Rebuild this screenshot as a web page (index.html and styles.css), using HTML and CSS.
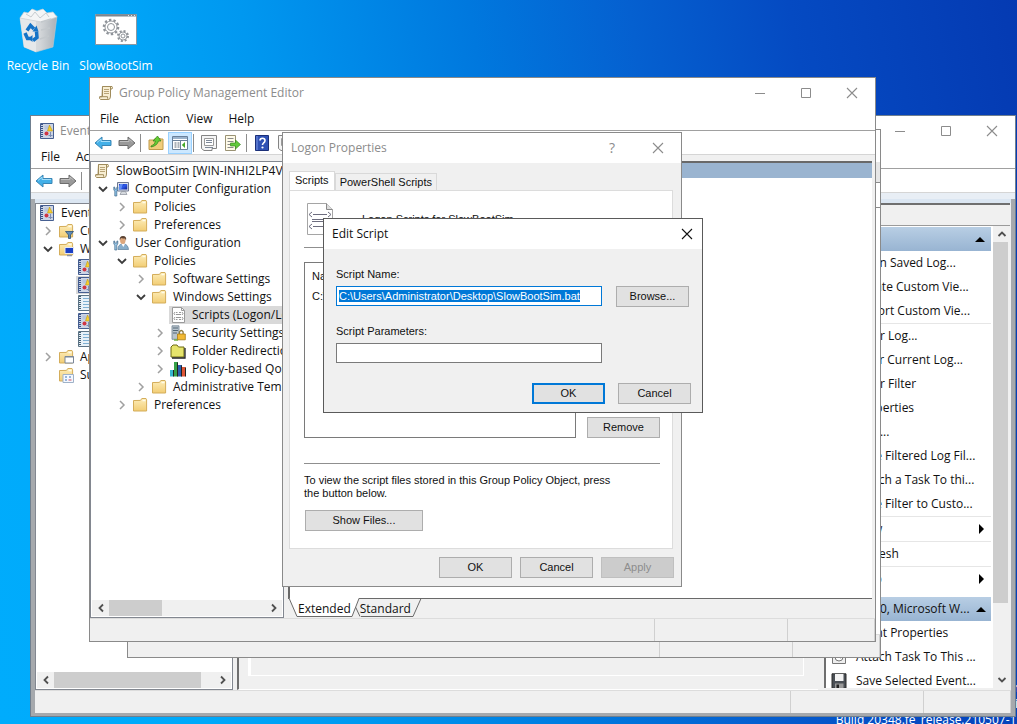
FILE: index.html
```
<!DOCTYPE html>
<html lang="en">
<head>
<meta charset="utf-8">
<title>Group Policy Management Editor</title>
<link rel="stylesheet" href="styles.css">
</head>
<body>
<svg class="sprite" aria-hidden="true">
  <defs>
    <linearGradient id="g-folder" x1="0" y1="0" x2="0" y2="1"><stop offset="0" stop-color="#fdedb8"/><stop offset="1" stop-color="#f2cd74"/></linearGradient>
    <linearGradient id="g-bin" x1="0" y1="0" x2="1" y2="0"><stop offset="0" stop-color="#e9ebed"/><stop offset=".55" stop-color="#d3d6d9"/><stop offset="1" stop-color="#a9b0b7"/></linearGradient>
    <linearGradient id="g-screen" x1="0" y1="0" x2="1" y2="1"><stop offset="0" stop-color="#1226a8"/><stop offset=".5" stop-color="#2f5bea"/><stop offset="1" stop-color="#0a1c90"/></linearGradient>
  </defs>
  <symbol id="chev-right" viewBox="0 0 10 10"><path d="M3 1l4 4-4 4" fill="none" stroke="#a0a0a0" stroke-width="1.5"/></symbol>
  <symbol id="chev-down" viewBox="0 0 10 10"><path d="M1 3l4 4 4-4" fill="none" stroke="#3c3c3c" stroke-width="1.8"/></symbol>
  <symbol id="arr-left" viewBox="0 0 10 10"><path d="M7 1.500L3.500 5 7 8.500" fill="none" stroke="#505050" stroke-width="1.8"/></symbol>
  <symbol id="arr-right" viewBox="0 0 10 10"><path d="M3 1.500L6.500 5 3 8.500" fill="none" stroke="#505050" stroke-width="1.8"/></symbol>
  <symbol id="arr-up" viewBox="0 0 10 10"><path d="M1.500 7L5 3.500 8.500 7" fill="none" stroke="#505050" stroke-width="1.8"/></symbol>
  <symbol id="arr-down" viewBox="0 0 10 10"><path d="M1.500 3L5 6.500 8.500 3" fill="none" stroke="#505050" stroke-width="1.8"/></symbol>
  <symbol id="min" viewBox="0 0 12 12"><path d="M1 6.500h10" stroke="currentColor"/></symbol>
  <symbol id="max" viewBox="0 0 12 12"><path d="M1.500 1.500h9v9h-9z" fill="none" stroke="currentColor"/></symbol>
  <symbol id="close" viewBox="0 0 12 12"><path d="M1 1l10 10M11 1L1 11" stroke="currentColor" stroke-width="1.1"/></symbol>
  <symbol id="scroll" viewBox="0 0 16 16"><path d="M4.500 1.500h9.500q1 .8 0 2.500h-1.500V11q0 3.500-2 3.500h-8q-1.500-.8-.8-2.800H4z" fill="#f8eed2" stroke="#a08c5c"/><path d="M4.500 1.500v10M1.800 11.700h7.700q-.2 2 1 2.800M12.500 4V2" fill="none" stroke="#a08c5c"/><path d="M6 4.500h5M6 6.500h5M6 8.500h5" stroke="#b9a578"/></symbol>
  <symbol id="folder" viewBox="0 0 16 16"><path d="M1.500 14V3.500H3l5.500-.1L9.800 1.500H14l.6 1.300V14z" fill="url(#g-folder)" stroke="#d4ad5a"/><path d="M10.500 3.500h3" stroke="#fffbe8" stroke-width="1.500"/></symbol>
  <symbol id="computer" viewBox="0 0 16 16"><path d="M4.500 1.500h11v8.500h-11z" fill="#dfe4ee" stroke="#6c7690"/><path d="M6 3h8.300v5.500H6z" fill="url(#g-screen)"/><path d="M7 3h3L8 8.500H6V5z" fill="#5f8cf5"/><path d="M8.500 10.500h4l1.500 3H7z" fill="#d5d9de" stroke="#8a8f99" stroke-width=".7"/><path d="M.8 6v3l1 1v5h2V10l1-1V6h-.9v2H1.700V6z" fill="#8cc2e8" stroke="#40688a" stroke-width=".7"/></symbol>
  <symbol id="user" viewBox="0 0 16 16"><path d="M5 14.500q0-5 4-5.500h2q4 .5 4.500 5.500z" fill="#88aecb" stroke="#5a7d99" stroke-width=".7"/><path d="M8.500 9l1.800 3 1.700-3z" fill="#fff"/><ellipse cx="9.800" cy="5.500" rx="2.700" ry="3.500" fill="#dda77c"/><path d="M6.800 5.500Q6 1 10 1t3 4.500l-1-2q-2 0-4-.5z" fill="#5c4333"/><path d="M.8 6v3l1 1v5h2V10l1-1V6h-.9v2H1.700V6z" fill="#9cc9e8" stroke="#40688a" stroke-width=".7"/></symbol>
  <symbol id="scripts" viewBox="0 0 16 16"><path d="M2.500.5h9l3 3v12h-12z" fill="#fff" stroke="#9a9a9a"/><path d="M11.500.5v3h3" fill="none" stroke="#9a9a9a"/><path d="M5 5L4 6.500 5 8M12 5l1 1.500L12 8M5 10l-1 1.500L5 13M12 10l1 1.500-1 1.500M6 5.500h1.500M9 5.500h2M6 7.500h5M6 10.500h5M6 12.500h1.500M9 12.500h2" fill="none" stroke="#8b8b8b" stroke-width=".9"/></symbol>
  <symbol id="security" viewBox="0 0 16 16"><path d="M2 .8h7v13.500H2z" fill="#b8c3cc" stroke="#6f8190" stroke-width=".8"/><path d="M3 3h5M3 5.500h5M3 8h4" stroke="#4f6475"/><path d="M4 15h4" stroke="#6cb33f" stroke-width="1.500"/><path d="M9.500 9V6.800q1.800-2.600 3.600 0V9" fill="none" stroke="#8c7a3e" stroke-width="1.300"/><path d="M7.500 9h7.800v5.800H7.500z" fill="#f2b933" stroke="#a97c14" stroke-width=".8"/></symbol>
  <symbol id="redirect" viewBox="0 0 16 16"><path d="M1 14V4l2-2h4l1.500 2H14v10z" fill="#e6e46c" stroke="#6d6b13"/><path d="M15 5v10H2" fill="none" stroke="#222" stroke-width="1.300"/></symbol>
  <symbol id="qos" viewBox="0 0 16 16"><path d="M0 9h4v6.500H0z" fill="#35b6cf"/><path d="M4 1h4v14.500H4z" fill="#35a047"/><path d="M8 4h4v11.500H8z" fill="#2a5cad"/><path d="M12 6h3.500v9.500H12z" fill="#dd5536"/><path d="M3.500 9v6.500M7.500 1.500v14M11.500 4.500v11M15.500 6.500v9" stroke="#222"/></symbol>
  <symbol id="back" viewBox="0 0 18 16"><path d="M1 8l7-6v3.500h9v5H8V14z" fill="#43b0e8" stroke="#3a86b5"/><path d="M3 7.500L7 4v2.500h9" fill="none" stroke="#a4defa"/></symbol>
  <symbol id="fwd" viewBox="0 0 18 16"><path d="M17 8l-7-6v3.500H1v5h9V14z" fill="#9a9a9a" stroke="#6d6d6d"/><path d="M2 6.500h9V4l3.500 3" fill="none" stroke="#c0c0c0"/></symbol>
  <symbol id="upfolder" viewBox="0 0 16 16"><path d="M1 14.500V5h5l1-1.500h5L13 4h2v10.500z" fill="#f0cd7c" stroke="#c09a4a"/><path d="M3 11q4-1 4.500-5H5l4.500-5L13 6h-2.500Q9 11 3 12z" fill="#65cc34" stroke="#2f8117" stroke-width=".7"/></symbol>
  <symbol id="tree" viewBox="0 0 16 16"><path d="M.5 1.500h15v13H.5z" fill="#fff" stroke="#69809a"/><path d="M1 3h14" stroke="#9bb3cb" stroke-width="2"/><path d="M1 5.500h14M8.500 6v8" stroke="#69809a"/><path d="M2.500 8h2M2.500 10h2M2.500 12h2M5.500 8h2M5.500 10h2M5.500 12h2" stroke="#5c6875"/><path d="M13 7v6L9.800 10z" fill="#44a827"/></symbol>
  <symbol id="props" viewBox="0 0 16 16"><path d="M.5.5h15v13H11v2H3l-2.500-2z" fill="#f5f5f5" stroke="#848484"/><path d="M3.500 3.500h9v7h-9z" fill="#fff" stroke="#9a9a9a"/><path d="M5 5.500h6M5 7.500h6M4 12.500h8" stroke="#7d8898"/></symbol>
  <symbol id="export" viewBox="0 0 16 16"><path d="M.5.500h10v15H.5z" fill="#fffbe9" stroke="#9a9274"/><path d="M2.500 3.500h6M2.500 6.500h6M2.500 9.500h3M2.500 12.500h6" stroke="#8b8b8b"/><path d="M5.500 8h5V5l5 4.500-5 4.500v-3h-5z" fill="#62c93c" stroke="#2f8117" stroke-width=".6"/></symbol>
  <symbol id="help" viewBox="0 0 16 16"><path d="M1.500.5h13v15h-13z" fill="#3052b5" stroke="#1b2f78"/><path d="M3 1v14" stroke="#7b96e3"/><path d="M6 5.500Q6 3.200 8.500 3.200T11 5.500Q11 7 9.500 8q-1 .8-1 2" fill="none" stroke="#fff" stroke-width="1.600"/><circle cx="8.500" cy="12.500" r="1.100" fill="#fff"/></symbol>
  <symbol id="eventlog" viewBox="0 0 16 16"><path d="M1.500.5h13v15h-13z" fill="#ccd5e6" stroke="#465f91"/><path d="M3 1v14" stroke="#3b5286" stroke-width="2" stroke-dasharray="1 1"/><path d="M5.500 2.500h4v4h-4z" fill="#b9c6dd"/><path d="M10.500 2L13.500 8h-5z" fill="#f6d02c" stroke="#b98a00" stroke-width=".5"/><circle cx="7.500" cy="10.500" r="2" fill="#cf3544"/><path d="M9.500 12.500h4M11.500 9v5" stroke="#7d8fb4"/></symbol>
  <symbol id="log" viewBox="0 0 16 16"><path d="M1.500.5h13v15h-13z" fill="#e8f1f8" stroke="#5c7486"/><path d="M3 1v14" stroke="#465f71" stroke-width="2" stroke-dasharray="1 1"/><path d="M6 3.500h7M6 6.500h7M6 9.500h7M6 12.500h7" stroke="#7fb0d2"/></symbol>
  <symbol id="folder-filter" viewBox="0 0 16 16"><use href="#folder"/><path d="M7.500 8.500h8L12.500 12v3.500h-2V12z" fill="#5d8bb8" stroke="#2d4f73" stroke-width=".8"/></symbol>
  <symbol id="folder-pc" viewBox="0 0 16 16"><use href="#folder"/><path d="M7 6.500h8.500v6H7z" fill="#1b3fc4" stroke="#e5e8f0"/><path d="M9 14.500h5" stroke="#8d93a0" stroke-width="1.500"/></symbol>
  <symbol id="folder-win" viewBox="0 0 16 16"><use href="#folder"/><path d="M7 7.500h8.500V14H7z" fill="#fff" stroke="#7b8798"/><path d="M7 8h8.500" stroke="#7b8798"/></symbol>
  <symbol id="folder-sub" viewBox="0 0 16 16"><use href="#folder"/><path d="M5 7.500h10.500v8H5z" fill="#f4f8ff" stroke="#9fb2c8"/><path d="M7 10h2M11 10h2M7 13h2" stroke="#3d73b5"/><path d="M10.500 13h3" stroke="#d04c5a"/></symbol>
  <symbol id="task" viewBox="0 0 16 16"><path d="M1.500 1.500h13v13h-13z" fill="#eee" stroke="#777"/><circle cx="8" cy="8" r="4" fill="#fff" stroke="#777"/><path d="M8 5.500V8l2 1" fill="none" stroke="#555"/></symbol>
  <symbol id="save" viewBox="0 0 16 16"><path d="M1 .8h14v14.400H1z" fill="#4a4f55" stroke="#2a2a2a"/><path d="M4 1h8.500v7H4z" fill="#f3f3f3"/><path d="M4 10.500h8.500V15H4z" fill="#999"/><path d="M5.500 11.500H8V15H5.500z" fill="#222"/></symbol>
</svg>

<main class="desktop">
  <div class="shortcuts">
    <a class="shortcut" href="#recycle">
      <svg viewBox="0 0 40 48">
        <path d="M2 12l37-2-4 31-17 5L6 41z" fill="url(#g-bin)" stroke="#c4c9cd" stroke-width=".6"/>
        <path d="M2 12l16 3v31L6 41z" fill="#e6e8ea"/>
        <path d="M2 12l4-6 4 1 4-4 5 2 6-2 4 4 6-1 4 5-15 5-6-1z" fill="#f4f5f6" stroke="#c9ced2" stroke-width=".7"/>
        <path d="M8 8l5 3 4-5 5 6 6-5 3 4" fill="none" stroke="#c6cbcf"/>
        <path d="M23 16l10-3M23 24l9-2M22 33l9-3" stroke="#c3c8cc" stroke-width="1.500"/>
        <g fill="none" stroke="#1473c7" stroke-width="3.500"><path d="M9 24.500l3.500-5 3.500 3.500"/><path d="M7 27l2.500 5.500h3.500"/><path d="M18.500 25.500l.5 6-4 3"/></g>
        <path d="M14.500 25.500h6l-2-6zM14.500 29v7l-4-3.500z" fill="#1473c7"/>
      </svg>
      <span>Recycle Bin</span>
    </a>
    <a class="shortcut" href="#slowbootsim">
      <svg viewBox="0 0 48 48">
        <path d="M3.500 8.500h41v30h-41z" fill="#fff" stroke="#8b98a3"/>
        <path d="M4 9.500h40" stroke="#7b8690" stroke-width="2"/><path d="M36 9.500h7" stroke="#dfe5ea" stroke-dasharray="1 2"/>
        <g fill="none" stroke="#8e9399"><circle cx="19" cy="21" r="7.200" stroke-width="2.200" stroke-dasharray="2.400 2.120"/><circle cx="19" cy="21" r="6" stroke-width=".9"/><circle cx="19" cy="21" r="3.500"/><circle cx="31" cy="30" r="5" stroke-width="2" stroke-dasharray="2 1.920"/><circle cx="31" cy="30" r="4" stroke-width=".9"/><circle cx="31" cy="30" r="2"/></g>
      </svg>
      <span>SlowBootSim</span>
    </a>
  </div>

  <div class="build">
    <div>Windows Server 2022 Datacenter</div>
    <div>Windows License is expired</div>
    <div>Build 20348.fe_release.210507-1500</div>
  </div>

  <section class="window event-viewer" aria-label="Event Viewer">
    <header class="caption">
      <svg class="ico"><use href="#eventlog"/></svg><span class="caption-text">Event Viewer</span>
      <button class="cap" aria-label="Minimize"><svg><use href="#min"/></svg></button>
      <button class="cap" aria-label="Maximize"><svg><use href="#max"/></svg></button>
      <button class="cap" aria-label="Close"><svg><use href="#close"/></svg></button>
    </header>
    <nav class="menu"><button>File</button><button>Action</button></nav>
    <div class="toolbar">
      <button aria-label="Back"><svg class="wide"><use href="#back"/></svg></button>
      <button aria-label="Forward"><svg class="wide"><use href="#fwd"/></svg></button>
      <i class="sep"></i>
    </div>
    <div class="ev-band"></div>
    <div class="ev-frame">
      <div class="ev-body">
        <div class="tree-pane ev-tree">
          <ul class="tree">
            <li><div class="node"><svg class="ico"><use href="#eventlog"/></svg>Event Viewer</div></li>
            <li class="l1"><i class="tw"><svg><use href="#chev-right"/></svg></i><div class="node"><svg class="ico"><use href="#folder-filter"/></svg>Custom Views</div></li>
            <li class="l1"><i class="tw"><svg><use href="#chev-down"/></svg></i><div class="node"><svg class="ico"><use href="#folder-pc"/></svg>Windows Logs</div></li>
            <li class="l2"><i class="tw"></i><div class="node"><svg class="ico"><use href="#eventlog"/></svg></div></li>
            <li class="l2"><i class="tw"></i><div class="node selected"><svg class="ico"><use href="#eventlog"/></svg></div></li>
            <li class="l2"><i class="tw"></i><div class="node"><svg class="ico"><use href="#log"/></svg></div></li>
            <li class="l2"><i class="tw"></i><div class="node"><svg class="ico"><use href="#eventlog"/></svg></div></li>
            <li class="l2"><i class="tw"></i><div class="node"><svg class="ico"><use href="#log"/></svg></div></li>
            <li class="l1"><i class="tw"><svg><use href="#chev-right"/></svg></i><div class="node"><svg class="ico"><use href="#folder-win"/></svg>Applications</div></li>
            <li class="l1"><i class="tw"></i><div class="node"><svg class="ico"><use href="#folder-sub"/></svg>Subscriptions</div></li>
          </ul>
          <div class="hscroll"><button aria-label="Left"><svg><use href="#arr-left"/></svg></button><div class="track"><div class="thumb wide-thumb"></div></div><button aria-label="Right"><svg><use href="#arr-right"/></svg></button></div>
        </div>
        <div class="ev-center"><div class="ev-detail"></div></div>
        <aside class="actions">
          <div class="actions-title">Actions</div>
          <div class="actions-main">
            <div class="actions-list">
              <h2 class="group"><span>System</span><i class="tri-up"></i></h2>
              <button>Open Saved Log...</button>
              <button>Create Custom Vie...</button>
              <button>Import Custom Vie...</button>
              <hr>
              <button>Clear Log...</button>
              <button>Filter Current Log...</button>
              <button>Clear Filter</button>
              <button>Properties</button>
              <button>Find...</button>
              <button>Save Filtered Log Fil...</button>
              <button>Attach a Task To thi...</button>
              <button>Save Filter to Custo...</button>
              <hr>
              <button class="sub"><span>View</span><i class="tri-right"></i></button>
              <hr>
              <button>Refresh</button>
              <hr>
              <button class="sub"><span>Help</span><i class="tri-right"></i></button>
              <h2 class="group second"><span>Event 640, Microsoft W...</span><i class="tri-up"></i></h2>
              <button>Event Properties</button>
              <button class="has-ico"><svg class="ico"><use href="#task"/></svg><span>Attach Task To This ...</span></button>
              <button class="has-ico"><svg class="ico"><use href="#save"/></svg><span>Save Selected Event...</span></button>
            </div>
            <div class="vscroll"><button aria-label="Up"><svg><use href="#arr-up"/></svg></button><div class="vtrack"><div class="vthumb"></div></div><button aria-label="Down"><svg><use href="#arr-down"/></svg></button></div>
          </div>
        </aside>
      </div>
      <footer class="status"><i class="main"></i><i></i><i class="last"></i></footer>
    </div>
  </section>

  <section class="window gpm" aria-label="Group Policy Management">
    <div class="gpm-head"></div>
    <div class="gpm-tools"></div>
    <div class="gpm-body"></div>
    <footer class="status"><i class="main"></i><i></i><i class="last"></i></footer>
  </section>

  <section class="window gpme" aria-label="Group Policy Management Editor">
    <header class="caption">
      <svg class="ico"><use href="#scroll"/></svg><span class="caption-text">Group Policy Management Editor</span>
      <button class="cap" aria-label="Minimize"><svg><use href="#min"/></svg></button>
      <button class="cap" aria-label="Maximize"><svg><use href="#max"/></svg></button>
      <button class="cap" aria-label="Close"><svg><use href="#close"/></svg></button>
    </header>
    <nav class="menu"><button>File</button><button>Action</button><button>View</button><button>Help</button></nav>
    <div class="toolbar">
      <button aria-label="Back"><svg class="wide"><use href="#back"/></svg></button>
      <button aria-label="Forward"><svg class="wide"><use href="#fwd"/></svg></button>
      <i class="sep"></i>
      <button aria-label="Up one level"><svg><use href="#upfolder"/></svg></button>
      <button class="on" aria-label="Show console tree"><svg><use href="#tree"/></svg></button>
      <i class="sep"></i>
      <button aria-label="Properties"><svg><use href="#props"/></svg></button>
      <button aria-label="Export list"><svg><use href="#export"/></svg></button>
      <i class="sep"></i>
      <button aria-label="Help"><svg><use href="#help"/></svg></button>
      <button aria-label="View"><svg><use href="#props"/></svg></button>
    </div>
    <div class="gpme-body">
      <div class="tree-pane gpme-tree">
        <ul class="tree">
          <li><div class="node"><svg class="ico"><use href="#scroll"/></svg>SlowBootSim [WIN-INHI2LP4VPD]</div></li>
          <li class="l1"><i class="tw"><svg><use href="#chev-down"/></svg></i><div class="node"><svg class="ico"><use href="#computer"/></svg>Computer Configuration</div></li>
          <li class="l2"><i class="tw"><svg><use href="#chev-right"/></svg></i><div class="node"><svg class="ico"><use href="#folder"/></svg>Policies</div></li>
          <li class="l2"><i class="tw"><svg><use href="#chev-right"/></svg></i><div class="node"><svg class="ico"><use href="#folder"/></svg>Preferences</div></li>
          <li class="l1"><i class="tw"><svg><use href="#chev-down"/></svg></i><div class="node"><svg class="ico"><use href="#user"/></svg>User Configuration</div></li>
          <li class="l2"><i class="tw"><svg><use href="#chev-down"/></svg></i><div class="node"><svg class="ico"><use href="#folder"/></svg>Policies</div></li>
          <li class="l3"><i class="tw"><svg><use href="#chev-right"/></svg></i><div class="node"><svg class="ico"><use href="#folder"/></svg>Software Settings</div></li>
          <li class="l3"><i class="tw"><svg><use href="#chev-down"/></svg></i><div class="node"><svg class="ico"><use href="#folder"/></svg>Windows Settings</div></li>
          <li class="l4"><i class="tw"></i><div class="node selected"><svg class="ico"><use href="#scripts"/></svg>Scripts (Logon/Logoff)</div></li>
          <li class="l4"><i class="tw"><svg><use href="#chev-right"/></svg></i><div class="node"><svg class="ico"><use href="#security"/></svg>Security Settings</div></li>
          <li class="l4"><i class="tw"><svg><use href="#chev-right"/></svg></i><div class="node"><svg class="ico"><use href="#redirect"/></svg>Folder Redirection</div></li>
          <li class="l4"><i class="tw"><svg><use href="#chev-right"/></svg></i><div class="node"><svg class="ico"><use href="#qos"/></svg>Policy-based QoS</div></li>
          <li class="l3"><i class="tw"><svg><use href="#chev-right"/></svg></i><div class="node"><svg class="ico"><use href="#folder"/></svg>Administrative Templates</div></li>
          <li class="l2"><i class="tw"><svg><use href="#chev-right"/></svg></i><div class="node"><svg class="ico"><use href="#folder"/></svg>Preferences</div></li>
        </ul>
        <div class="hscroll"><button aria-label="Left"><svg><use href="#arr-left"/></svg></button><div class="track"><div class="thumb"></div></div><button aria-label="Right"><svg><use href="#arr-right"/></svg></button></div>
      </div>
      <div class="result">
        <div class="result-view"><div class="result-head"></div></div>
        <div class="sheet-tabs">
          <svg class="sheet-lines" viewBox="0 0 140 20"><path d="M1 0h70l-7 18.500H9z" fill="#fff"/><path d="M1 0l8 18.500h55L71 .5h62L125 18.500H73" fill="none" stroke="#6a6a6a"/><path d="M67.500 9L72 18.500" stroke="#6a6a6a"/></svg>
          <button>Extended</button><button>Standard</button>
        </div>
      </div>
    </div>
    <footer class="status"><i class="main"></i><i></i><i class="last"></i></footer>
  </section>

  <section class="window dialog logon" role="dialog" aria-label="Logon Properties">
    <header class="caption">
      <span class="caption-text">Logon Properties</span>
      <button class="cap q" aria-label="Help">?</button>
      <button class="cap" aria-label="Close"><svg><use href="#close"/></svg></button>
    </header>
    <div class="logon-body">
      <div class="tabs" role="tablist"><button class="tab active" role="tab">Scripts</button><button class="tab" role="tab">PowerShell Scripts</button></div>
      <div class="page">
        <div class="page-head">
          <svg viewBox="0 0 26 32"><path d="M.5.500h19l6 6v25H.5z" fill="#fff" stroke="#a5a5a5"/><path d="M19.500.500v6h6" fill="#ddd" stroke="#8a8a8a"/><path d="M5 9l-3 2.500L5 14M21 9l3 2.500-3 2.500M5 21l-3 2.500L5 26M21 21l3 2.500-3 2.500M6 11.500h14M5 16.500h18M5 18.500h18M6 23.500h14" fill="none" stroke="#5c5c70" stroke-width=".9"/></svg>
          <span>Logon Scripts for SlowBootSim</span>
        </div>
        <hr>
        <div class="list-row">
          <div class="listbox"><div>Name</div><div>C:\Users\Administrator</div></div>
          <button class="btn">Remove</button>
        </div>
        <hr>
        <p>To view the script files stored in this Group Policy Object, press the button below.</p>
        <button class="btn show">Show Files...</button>
      </div>
      <div class="buttons"><button class="btn">OK</button><button class="btn">Cancel</button><button class="btn" disabled>Apply</button></div>
    </div>
  </section>

  <section class="window dialog edit" role="dialog" aria-label="Edit Script">
    <header class="caption">
      <span class="caption-text">Edit Script</span>
      <button class="cap narrow" aria-label="Close"><svg><use href="#close"/></svg></button>
    </header>
    <form class="edit-body">
      <label for="script-name">Script Name:</label>
      <div class="field"><input id="script-name" class="primary" type="text" value="C:\Users\Administrator\Desktop\SlowBootSim.bat" spellcheck="false"><button type="button" class="btn">Browse...</button></div>
      <label for="script-params">Script Parameters:</label>
      <div class="field"><input id="script-params" type="text"></div>
      <div class="edit-buttons"><button type="button" class="btn default">OK</button><button type="button" class="btn">Cancel</button></div>
    </form>
  </section>
</main>
<script src="app.js"></script>
</body>
</html>
```
FILE: styles.css
```
* { box-sizing: border-box; }
body {
  margin: 0;
  font: 12px/16px "Open Sans", "Noto Sans", sans-serif;
  color: #111;
}
button, input {
  font: inherit;
  color: inherit;
  margin: 0;
  padding: 0;
  border: 0;
  background: none;
  border-radius: 0;
}
h2, p, ul { margin: 0; padding: 0; }
h2 { font: inherit; }
ul { list-style: none; }
i { font-style: normal; }
svg { display: block; flex: none; }
.sprite { position: absolute; width: 0; height: 0; }

.desktop {
  position: relative;
  height: 100vh;
  overflow: hidden;
  background: linear-gradient(80deg, #00acfc 0, #00a9fa 18%, #0098f0 32%, #0078de 52%, #0560d0 66%, #054ac2 80%, #053ab2 100%);
}

.shortcuts { display: flex; gap: 2px; padding-top: 6px; }
.shortcut {
  width: 76px;
  display: flex;
  flex-direction: column;
  align-items: center;
  gap: 4px;
  color: #fff;
  text-decoration: none;
  white-space: nowrap;
}
.shortcut svg { width: 48px; height: 48px; }

.build {
  position: absolute;
  right: -20px;
  bottom: -4px;
  color: #fff;
  text-align: right;
  white-space: nowrap;
}

/* Windows */
.window {
  position: absolute;
  display: flex;
  flex-direction: column;
  border: 1px solid #8a8a8a;
  background: #f0f0f0;
  overflow: hidden;
}
.caption {
  flex: none;
  height: 30px;
  display: flex;
  align-items: center;
  padding-left: 8px;
  background: #fff;
  color: #8c8c8c;
}
.caption .ico { margin-right: 5px; }
.caption-text { flex: 1; white-space: nowrap; }
.cap { width: 46px; height: 30px; display: flex; align-items: center; justify-content: center; }
.cap svg { width: 12px; height: 12px; }
.cap.q { font-size: 14px; }
.cap.narrow { width: 30px; }
.ico { width: 16px; height: 16px; }

.menu {
  flex: none;
  height: 23px;
  display: flex;
  padding-left: 2px;
  background: #fff;
  border-bottom: 1px solid #a0a0a0;
}
.menu button { padding: 0 8px; }
.toolbar {
  flex: none;
  height: 24px;
  display: flex;
  align-items: center;
  padding-left: 1px;
  background: #fff;
  border-bottom: 1px solid #d5d5d5;
  overflow: hidden;
}
.toolbar button { flex: none; width: 24px; height: 22px; display: flex; align-items: center; justify-content: center; }
.toolbar button.on { background: #cce8ff; border: 1px solid #99d1ff; }
.toolbar svg { width: 16px; height: 16px; }
.toolbar svg.wide { width: 18px; }
.sep { flex: none; width: 1px; height: 18px; margin: 0 3px 0 1px; background: #8d8d8d; }

.tree-pane { display: flex; flex-direction: column; background: #fff; border: 1px solid #828790; overflow: hidden; }
.tree { flex: 1; padding-left: 2px; min-height: 0; overflow: hidden; }
.tree li { height: 18px; display: flex; white-space: nowrap; }
.tree .l2 { padding-left: 19px; }
.tree .l3 { padding-left: 38px; }
.tree .l4 { padding-left: 57px; }
.tw { flex: none; width: 19px; display: flex; align-items: center; justify-content: center; }
.tw svg { width: 10px; height: 10px; }
.node { flex: 1; display: flex; align-items: center; padding-left: 1px; }
.node .ico { margin-right: 6px; }
.node.selected { background: #d9d9d9; }

.hscroll { flex: none; height: 16px; display: flex; margin: 0 1px 1px; background: #f0f0f0; }
.hscroll button, .vscroll button { flex: none; width: 17px; height: 16px; display: flex; align-items: center; justify-content: center; }
.hscroll svg, .vscroll svg { width: 10px; height: 10px; }
.track { flex: 1; display: flex; }
.thumb { width: 34%; background: #cdcdcd; }
.wide-thumb { width: 92%; }

.status { flex: none; height: 23px; display: flex; border-top: 1px solid #dcdcdc; }
.status i { width: 133px; border-right: 1px solid #d0d0d0; }
.status .main { flex: 1; }
.status .last { width: 87px; }

/* Event Viewer */
.event-viewer { left: 30px; right: 1px; top: 115px; bottom: 7px; border-color: #6f7f8f; }
.ev-band { flex: none; height: 6px; background: #e8eef5; }
.ev-frame { flex: 1; min-height: 0; display: flex; flex-direction: column; border: solid #a6a9ad; border-width: 0 4px 3px 4px; }
.ev-body { flex: 1; min-height: 0; display: flex; padding-top: 4px; background: linear-gradient(#dbe6f2, #dbe6f2 4px, #f0f0f0 4px); }
.ev-tree { width: 198px; }
.ev-center { flex: 1; margin-left: 4px; border-left: 2px solid #6f6f6f; display: flex; padding: 0 14px 13px 9px; border-top: 1px solid #6f6f6f; border-bottom: 1px solid #fff; }
.ev-detail { flex: 1; border: 3px solid #fff; border-width: 0 1px 1px 3px; }
.actions { width: 186px; margin: 0 1px 2px 6px; display: flex; flex-direction: column; border-left: 2px solid #6f6f6f; border-top: 2px solid #6f6f6f; background: #fff; }
.actions-title { flex: none; height: 21px; padding: 2px 4px; background: #f0f0f0; border-bottom: 1px solid #9b9b9b; }
.actions-main { flex: 1; min-height: 0; display: flex; gap: 2px; }
.actions-list { flex: 1; min-width: 0; overflow: hidden; padding-top: 1px; display: flex; flex-direction: column; }
.actions-list > * { flex: none; }
.group { height: 24px; display: flex; align-items: center; justify-content: space-between; gap: 6px; padding: 0 6px; background: linear-gradient(#b8cee4, #98b4d2); }
.group span { white-space: nowrap; }
.group.second { margin-top: 6px; }
.actions-list button { height: 24px; line-height: 24px; padding: 0 8px 0 30px; text-align: left; white-space: nowrap; }
.actions-list hr { width: 100%; height: 1px; margin: 0; border: 0; background: #e6e6e6; }
.actions-list .sub { display: flex; align-items: center; justify-content: space-between; padding-right: 7px; }
.actions-list .has-ico { display: flex; align-items: center; gap: 9px; padding-left: 5px; }
.tri-up { flex: none; border: 5px solid transparent; border-top: 0; border-bottom-color: #000; }
.tri-right { flex: none; border: 5px solid transparent; border-right: 0; border-left-color: #000; }
.vscroll { flex: none; width: 17px; display: flex; flex-direction: column; background: #f0f0f0; }
.vtrack { flex: 1; }
.vthumb { height: 84%; background: #cdcdcd; margin-right: 2px; }

/* Group Policy Management, mostly covered */
.gpm { left: 127px; right: 136px; top: 129px; bottom: 66px; background: #fff; }
.gpm-head { height: 32px; }
.gpm-tools { height: 21px; background: #e6e6e6; border-bottom: 1px solid #8a8a8a; }
.gpm-body { flex: 1; margin-top: 24px; border-top: 1px solid #8a8a8a; }
.gpm .status { background: #f0f0f0; }

/* Group Policy Management Editor */
.gpme { left: 89px; right: 141px; top: 77px; bottom: 82px; }
.gpme-body { flex: 1; min-height: 0; display: flex; margin-top: 6px; }
.gpme-tree { width: 194px; }
.result { flex: 1; margin-left: 4px; margin-right: 2px; display: flex; flex-direction: column; }
.result-view { flex: 1; background: #fff; border: solid #696969; border-width: 2px 0 1px 2px; margin-right: 1px; }
.result-head { height: 15px; background: #9ab4d0; }
.sheet-tabs { flex: none; position: relative; height: 19px; display: flex; padding-left: 10px; gap: 9px; }
.sheet-lines { position: absolute; left: 0; top: -1px; width: 140px; height: 20px; }
.sheet-tabs button { position: relative; }

/* Dialogs */
.dialog .btn, .dialog label, .dialog p, .tabs, .page, .edit-body { font-family: "Liberation Sans", Arial, sans-serif; font-size: 11px; line-height: 13px; }
.btn { width: 73px; height: 21px; background: #e1e1e1; border: 1px solid #adadad; text-align: center; }
.btn:disabled { background: #cccccc; border-color: #bfbfbf; color: #8d8d8d; }
.btn.default { border: 2px solid #0078d7; }
.logon { left: 282px; top: 132px; width: 400px; }
.logon-body { padding: 8px 7px 8px 6px; }
.tabs { display: flex; align-items: flex-end; height: 19px; }
.tab { height: 17px; padding: 0 4px; border: 1px solid #d9d9d9; border-bottom: 0; background: #f0f0f0; }
.tab.active { height: 19px; padding: 0 5px 2px; background: #fff; }
.page { border: 1px solid #dcdcdc; background: #fff; padding: 12px 12px 17px 14px; margin-right: 1px; display: flex; flex-direction: column; }
.page-head { display: flex; align-items: center; gap: 29px; padding-left: 3px; }
.page-head svg { width: 26px; height: 32px; }
.page hr { width: 100%; height: 1px; margin: 12px 0 14px; border: 0; background: #8f8f8f; }
.list-row { display: flex; align-items: flex-end; justify-content: space-between; }
.listbox { width: 272px; height: 176px; border: 1px solid #7a7a7a; padding: 7px; display: flex; flex-direction: column; gap: 7px; overflow: hidden; white-space: nowrap; }
.list-row + hr { margin: 25px 0 10px; }
.page p { width: 310px; }
.btn.show { width: 118px; margin: 10px 0 0 1px; }
.buttons { display: flex; justify-content: flex-end; gap: 8px; padding-top: 8px; }

.edit { left: 323px; top: 218px; width: 380px; border-color: #5a5a5a; }
.edit .caption { color: #111; }
.edit-body { padding: 19px 11px 8px 12px; display: flex; flex-direction: column; }
.edit-body label { margin-bottom: 5px; }
.field { display: flex; gap: 14px; height: 21px; }
.field + label { margin-top: 18px; }
.field input { width: 266px; height: 20px; padding: 0 2px; border: 1px solid #7a7a7a; background: #fff; outline: 0; font-size: 11px; }
.field input.primary { border-color: #0078d7; }
.field input::selection { background: #0078d7; color: #fff; }
.edit-buttons { display: flex; justify-content: flex-end; gap: 13px; margin-top: 19px; }
```
FILE: app.js
```
const scriptName = document.getElementById("script-name");
scriptName.focus();
scriptName.select();
```
